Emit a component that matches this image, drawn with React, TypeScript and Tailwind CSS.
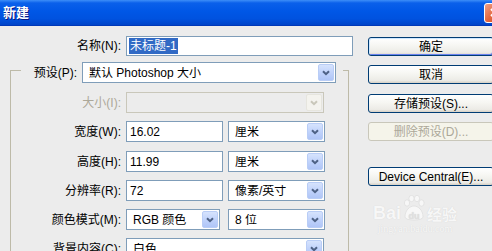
import React from 'react';

const font = "font-['Liberation_Sans','Noto_Sans_CJK_SC',sans-serif]";

function Chevron({ disabled }: { disabled?: boolean }) {
  return (
    <svg width="8" height="6" viewBox="0 0 8 6">
      <path d="M1 1.2 L4 4.2 L7 1.2" fill="none" stroke={disabled ? '#c9c7ba' : '#4d6185'} strokeWidth="2" />
    </svg>
  );
}

function Select({ value, className, disabled }: { value?: string; className: string; disabled?: boolean }) {
  return (
    <div
      className={`${className} flex h-[21px] items-center border ${
        disabled ? 'border-[#c9c7ba] bg-[#ececec]' : 'border-[#7f9db9] bg-white'
      }`}
    >
      <span className="flex-1 truncate pl-[6px] leading-none">{value}</span>
      <div
        className={`mr-px flex h-[17px] w-[16px] items-center justify-center rounded-[2px] border ${
          disabled
            ? 'border-[#e6e5de] bg-[#f4f3ee]'
            : 'border-[#b9cdf6] bg-[linear-gradient(180deg,#d6e3fd_0%,#c1d3fb_50%,#afc5f7_100%)]'
        }`}
      >
        <Chevron disabled={disabled} />
      </div>
    </div>
  );
}

function Input({ children, className }: { children: React.ReactNode; className: string }) {
  return (
    <div className={`${className} flex h-[21px] items-center border border-[#7f9db9] bg-white pl-[3px] leading-none`}>
      {children}
    </div>
  );
}

function Button({ label, primary, disabled, className }: { label: string; primary?: boolean; disabled?: boolean; className?: string }) {
  return (
    <div
      className={`${className ?? ''} flex h-[19px] w-[126px] shrink-0 items-center justify-center rounded-[3px] border leading-none ${
        disabled
          ? 'border-[#c9c7ba] bg-[#f5f4ea] text-[#aca899]'
          : 'border-[#003c74] bg-[linear-gradient(180deg,#ffffff_0%,#f6f6f2_45%,#ecebe6_85%,#d6d0c5_100%)] text-black'
      } ${primary ? 'shadow-[inset_1px_1px_0_#cee7ff,inset_-1px_-1px_0_#6982ee]' : ''}`}
    >
      {label}
    </div>
  );
}

function Row({ label, disabled, className, children }: { label: string; disabled?: boolean; className?: string; children: React.ReactNode }) {
  return (
    <div className={`${className ?? ''} flex h-[21px] items-center gap-[5px]`}>
      <div className={`w-[110px] text-right leading-none ${disabled ? 'text-[#aca899]' : ''}`}>{label}</div>
      {children}
    </div>
  );
}

export default function App() {
  return (
    <div className={`relative h-[251px] w-[492px] overflow-hidden bg-[#ececec] text-[12px] text-black ${font}`}>
      {/* title bar */}
      <div className="flex h-[26px] items-center overflow-hidden border-b border-[#0038b8] bg-[linear-gradient(180deg,#3d8ef8_0%,#0a60ea_12%,#0057e6_45%,#0052df_75%,#0044c8_100%)]">
        <div className="flex-1 pl-[3px] text-[13px] font-bold text-white [text-shadow:1px_1px_0_#0a1883]">新建</div>
        <div className="mr-[-13px] flex h-[20px] w-[21px] shrink-0 items-center justify-center rounded-[3px] border border-white bg-[linear-gradient(135deg,#f0a086_0%,#e2673f_50%,#c9401c_100%)]">
          <svg width="9" height="9" viewBox="0 0 9 9">
            <path d="M1 1 L8 8 M8 1 L1 8" stroke="#fff" strokeWidth="2" />
          </svg>
        </div>
      </div>

      <div className="flex pt-[10px]">
        {/* left column */}
        <div className="w-[368px] shrink-0">
          <div className="flex h-[20px] items-center gap-[5px]">
            <div className="w-[121px] text-right leading-none">名称(N):</div>
            <div className="flex h-[20px] w-[227px] items-center border border-[#7f9db9] bg-white pl-[2px]">
              <span className="bg-[#316ac5] px-px py-[2px] leading-none text-white">未标题-1</span>
            </div>
          </div>

          <div className="ml-[10px] mt-[14px] h-[200px] w-[339px] border-x border-t border-[#bdbaa8]">
            <div className="ml-[10px] mr-[5px] -mt-[9px] flex h-[21px] items-center gap-[5px] bg-[#ececec]">
              <div className="w-[56px] text-right leading-none">预设(P):</div>
              <Select className="w-[254px]" value="默认 Photoshop 大小" />
            </div>

            <div className="mt-[9px] flex flex-col gap-[8px]">
              <Row label="大小(I):" disabled>
                <Select className="w-[198px]" disabled />
              </Row>
              <Row label="宽度(W):">
                <Input className="w-[97px]">16.02</Input>
                <Select className="w-[97px]" value="厘米" />
              </Row>
              <Row label="高度(H):" className="mt-px">
                <Input className="w-[97px]">11.99</Input>
                <Select className="w-[97px]" value="厘米" />
              </Row>
              <Row label="分辨率(R):">
                <Input className="w-[97px]">72</Input>
                <Select className="w-[97px]" value="像素/英寸" />
              </Row>
              <Row label="颜色模式(M):">
                <Select className="w-[94px]" value="RGB 颜色" />
                <Select className="ml-[3px] w-[97px]" value="8 位" />
              </Row>
              <Row label="背景内容(C):">
                <Select className="w-[198px]" value="白色" />
              </Row>
            </div>
          </div>
        </div>

        {/* right column */}
        <div className="flex flex-col pt-px">
          <Button label="确定" primary />
          <Button label="取消" className="mt-[9px]" />
          <Button label="存储预设(S)..." className="mt-[10px]" />
          <Button label="删除预设(D)..." disabled className="mt-[9px]" />
          <Button label="Device Central(E)..." className="mt-[26px]" />
        </div>
      </div>

      {/* watermark */}
      <div className="pointer-events-none absolute left-[373px] top-[195px] flex flex-col items-center text-[#f7f7f7] [text-shadow:0_0_1px_#d0d0d0]">
        <div className="flex items-end gap-[1px]">
          <span className="font-['Liberation_Sans',sans-serif] text-[18px] font-bold leading-none">Bai</span>
          <svg width="24" height="27" viewBox="0 0 24 27">
            <g fill="#f7f7f7" stroke="#d8d8d8" strokeWidth="0.6">
              <ellipse cx="5" cy="8" rx="2.6" ry="3.2" />
              <ellipse cx="9.5" cy="3.5" rx="2.6" ry="3.2" />
              <ellipse cx="15" cy="3.5" rx="2.6" ry="3.2" />
              <ellipse cx="19.5" cy="8" rx="2.6" ry="3.2" />
              <path d="M3 22 C3 15 8 11 12 11 C16 11 21 15 21 22 C21 26 3 26 3 22 Z" />
            </g>
            <text x="12" y="24" textAnchor="middle" fontSize="9" fontWeight="bold" fill="#e0e0e0" fontFamily="Liberation Sans">du</text>
          </svg>
          <span className="text-[15px] font-bold leading-none">经验</span>
        </div>
        <span className="mt-[2px] font-['Liberation_Serif',serif] text-[10px] leading-none">jingyan.baidu.com</span>
      </div>
    </div>
  );
}
